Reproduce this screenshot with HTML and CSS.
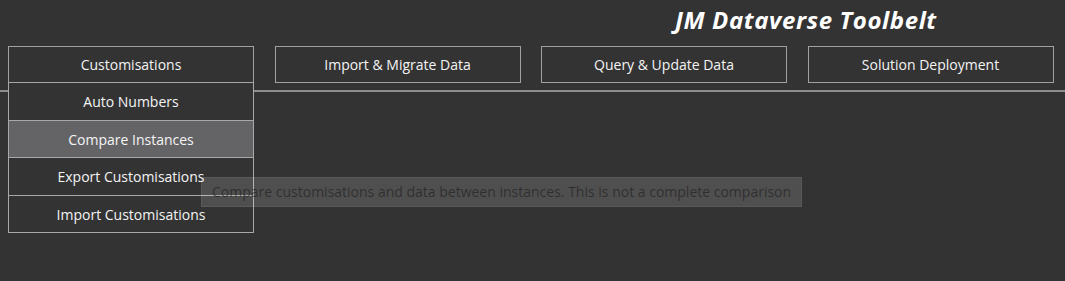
FILE: index.html
```html
<!DOCTYPE html>
<html lang="en">
<head>
    <meta charset="UTF-8">
    <meta name="viewport" content="width=device-width, initial-scale=1.0">
    <title>JM Dataverse Toolbelt</title>
    <link rel="stylesheet" href="styles.css">
</head>
<body>
    <div id="app">
        <header class="title-bar">
            <h1>JM Dataverse Toolbelt</h1>
        </header>
        <nav class="main-menu">
            <div class="menu-item open">
                <button class="menu-button">Customisations</button>
                <ul class="dropdown">
                    <li>Auto Numbers</li>
                    <li class="hover">Compare Instances</li>
                    <li>Export Customisations</li>
                    <li>Import Customisations</li>
                </ul>
            </div>
            <div class="menu-item">
                <button class="menu-button">Import &amp; Migrate Data</button>
            </div>
            <div class="menu-item">
                <button class="menu-button">Query &amp; Update Data</button>
            </div>
            <div class="menu-item">
                <button class="menu-button">Solution Deployment</button>
            </div>
        </nav>
        <div class="divider"></div>
        <div class="tooltip">Compare customisations and data between instances. This is not a complete comparison</div>
    </div>
</body>
</html>
```

FILE: styles.css
```css
* {
    margin: 0;
    padding: 0;
    box-sizing: border-box;
}

body {
    background: #333333;
    font-family: "Open Sans", "Noto Sans", sans-serif;
    color: #f4f4f4;
    width: 1065px;
    height: 281px;
    overflow: hidden;
}

#app {
    position: relative;
    height: 100%;
}

.title-bar {
    height: 46px;
    padding-left: 675px;
    padding-top: 6px;
}

.title-bar h1 {
    font-size: 24px;
    font-weight: 700;
    font-style: italic;
    color: #ffffff;
    line-height: 28px;
    letter-spacing: 0.6px;
}

.main-menu {
    display: grid;
    grid-template-columns: repeat(4, 246px);
    column-gap: 20.5px;
    padding-left: 8px;
}

.menu-item {
    position: relative;
}

.menu-button {
    display: block;
    width: 100%;
    height: 37px;
    background: #333333;
    border: 1px solid #a0a0a0;
    color: #f4f4f4;
    font-family: inherit;
    font-size: 14px;
    cursor: pointer;
}

.dropdown {
    position: absolute;
    top: 36px;
    left: 0;
    width: 246px;
    list-style: none;
    background: #333333;
    border: 1px solid #a8a8a8;
    z-index: 2;
}

.dropdown li {
    height: 37px;
    line-height: 37px;
    text-align: center;
    font-size: 14px;
    border-top: 1px solid #a8a8a8;
}

.dropdown li:first-child {
    border-top: none;
}

.dropdown li:nth-child(3) {
    height: 38px;
}

.dropdown li.hover {
    background: #646467;
}

.divider {
    margin-top: 7px;
    height: 2px;
    background: #8c8c8c;
}

.tooltip {
    position: absolute;
    top: 177px;
    left: 201px;
    width: 601px;
    height: 30px;
    line-height: 28px;
    padding-left: 10px;
    font-size: 14px;
    color: rgba(25, 25, 25, 0.6);
    background: rgba(255, 255, 255, 0.14);
    border: 1px solid rgba(255, 255, 255, 0.06);
    z-index: 3;
    white-space: nowrap;
}
```
